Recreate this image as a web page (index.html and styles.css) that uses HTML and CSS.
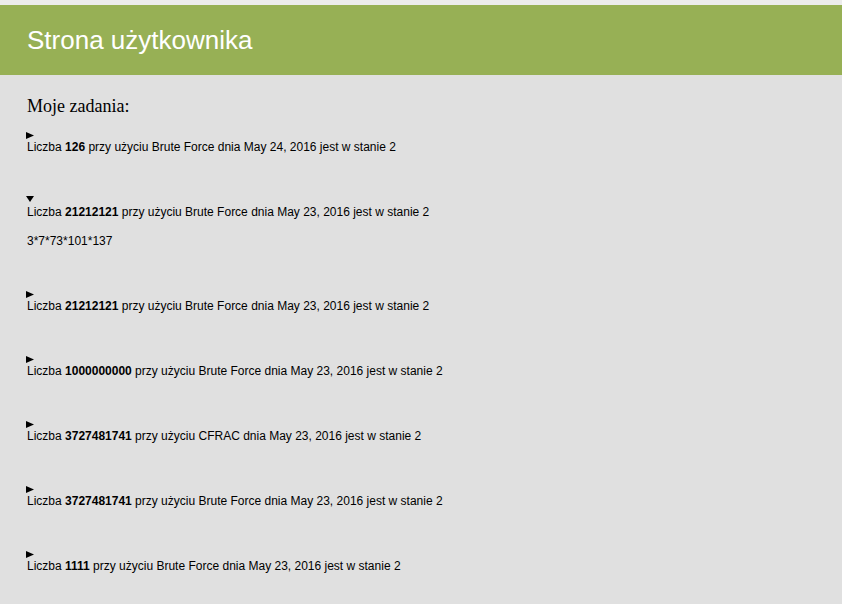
FILE: index.html
```html
<!DOCTYPE html>
<html lang="pl">
<head>
<meta charset="utf-8">
<title>Strona użytkownika</title>
<link rel="stylesheet" href="styles.css">
</head>
<body>
<div class="topline"></div>
<header class="header">
  <h1 class="title">Strona użytkownika</h1>
</header>
<main class="content">
  <h2 class="section-title">Moje zadania:</h2>
  <div class="task">
    <span class="marker marker-closed"></span>
    <div class="task-line">Liczba <b>126</b> przy użyciu Brute Force dnia May 24, 2016 jest w stanie 2</div>
  </div>
  <div class="task">
    <span class="marker marker-open"></span>
    <div class="task-line">Liczba <b>21212121</b> przy użyciu Brute Force dnia May 23, 2016 jest w stanie 2</div>
    <div class="task-result">3*7*73*101*137</div>
  </div>
  <div class="task">
    <span class="marker marker-closed"></span>
    <div class="task-line">Liczba <b>21212121</b> przy użyciu Brute Force dnia May 23, 2016 jest w stanie 2</div>
  </div>
  <div class="task">
    <span class="marker marker-closed"></span>
    <div class="task-line">Liczba <b>1000000000</b> przy użyciu Brute Force dnia May 23, 2016 jest w stanie 2</div>
  </div>
  <div class="task">
    <span class="marker marker-closed"></span>
    <div class="task-line">Liczba <b>3727481741</b> przy użyciu CFRAC dnia May 23, 2016 jest w stanie 2</div>
  </div>
  <div class="task">
    <span class="marker marker-closed"></span>
    <div class="task-line">Liczba <b>3727481741</b> przy użyciu Brute Force dnia May 23, 2016 jest w stanie 2</div>
  </div>
  <div class="task">
    <span class="marker marker-closed"></span>
    <div class="task-line">Liczba <b>1111</b> przy użyciu Brute Force dnia May 23, 2016 jest w stanie 2</div>
  </div>
</main>
</body>
</html>
```
FILE: styles.css
```css
html, body {
  margin: 0;
  padding: 0;
}
body {
  background: #e0e0e0;
  color: #000;
  font-family: "Liberation Sans", Arial, sans-serif;
  overflow: hidden;
}
.topline {
  height: 5px;
  background: #ececec;
}
.header {
  background: #97b055;
  height: 70px;
  display: flex;
  align-items: center;
  padding-left: 27px;
}
.title {
  margin: 0;
  font-family: "Liberation Sans", Arial, sans-serif;
  font-weight: normal;
  font-size: 26px;
  color: #fff;
  line-height: 30px;
}
.content {
  padding: 0 27px;
}
.section-title {
  margin: 21px 0 14px;
  font-family: "Liberation Serif", "Times New Roman", serif;
  font-weight: normal;
  font-size: 18px;
  line-height: 21px;
}
.task {
  margin-bottom: 41px;
}
.marker {
  display: block;
  height: 9px;
  position: relative;
}
.marker::before {
  content: "";
  position: absolute;
  left: -1px;
  background: #000;
}
.marker-closed::before {
  top: 1px;
  width: 8px;
  height: 7px;
  clip-path: polygon(0 0, 100% 50%, 0 100%);
}
.marker-open::before {
  top: 0;
  width: 8px;
  height: 6px;
  clip-path: polygon(0 0, 100% 0, 50% 100%);
}
.task-line {
  font-size: 12px;
  line-height: 15px;
}
.task-result {
  margin-top: 14px;
  font-size: 12px;
  line-height: 15px;
}
```
